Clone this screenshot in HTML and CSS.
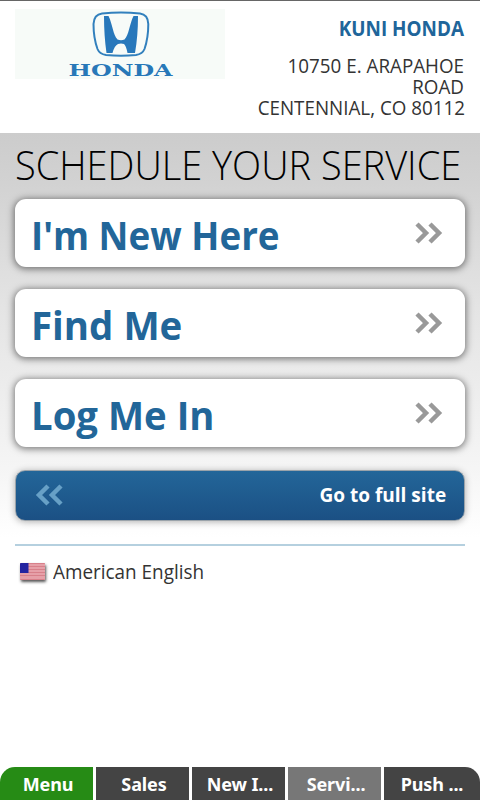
FILE: index.html
```html
<!DOCTYPE html>
<html lang="en">
<head>
<meta charset="utf-8">
<title>Schedule Your Service</title>
<link rel="stylesheet" href="styles.css">
</head>
<body>
<div class="page">
  <header class="header">
    <svg class="logo" viewBox="0 0 210 70" width="210" height="70">
      <path fill="none" stroke="#3280bd" stroke-width="2" d="M87 4.500Q106 2.500 125 4.500Q133 5.500 133.300 15Q133.300 29 129.500 40Q127.500 45 121 46Q106 47.500 91 46Q84.500 45 82.500 40Q78.500 29 78.500 15Q79 5.500 87 4.500Z"/>
      <path fill="#2878bb" d="M89 7h4.500C97.500 15 98 26 102.500 30.500Q106 32 109.500 30.500C114 26 114.500 15 118.500 7h4.500Q123 27 120 44h-7.500Q111 36.500 109 35Q106 34.200 103 35Q99.500 36.500 97.500 44H91.500Q89 27 89 7Z"/>
      <text class="logo-text" x="53.500" y="67" textLength="104" lengthAdjust="spacingAndGlyphs">HONDA</text>
    </svg>
    <div class="dealer">
      <div class="name"><span>KUNI HONDA</span></div>
      <div class="address"><span>10750 E. ARAPAHOE</span><span>ROAD</span><span>CENTENNIAL, CO 80112</span></div>
    </div>
  </header>
  <main class="main">
    <h1 class="title">SCHEDULE YOUR SERVICE</h1>
    <nav class="choices">
      <a class="choice"><span class="new">I'm New Here</span><svg class="chev" viewBox="0 0 28 22"><path d="M2 2l9 9-9 9M15 2l9 9-9 9"/></svg></a>
      <a class="choice"><span class="find">Find Me</span><svg class="chev" viewBox="0 0 28 22"><path d="M2 2l9 9-9 9M15 2l9 9-9 9"/></svg></a>
      <a class="choice"><span class="log">Log Me In</span><svg class="chev" viewBox="0 0 28 22"><path d="M2 2l9 9-9 9M15 2l9 9-9 9"/></svg></a>
    </nav>
    <a class="full"><svg class="chev back" viewBox="0 0 28 22"><path d="M13 2l-9 9 9 9M26 2l-9 9 9 9"/></svg><span>Go to full site</span></a>
    <div class="language">
      <svg class="flag" viewBox="0 0 25 17" width="25" height="17"><path fill="#e6a0a8" d="M0 0h25v17H0z"/><path stroke="#d8808a" stroke-width="1" d="M0 .5h25M0 3.500h25M0 6.500h25M0 9.500h25M0 12.500h25M0 16.500h25"/><path fill="#2424a0" d="M0 0h8.500v10H0z"/></svg>
      <span>American English</span>
    </div>
  </main>
  <footer class="tabs"><a class="tab on">Menu</a><a class="tab">Sales</a><a class="tab">New I...</a><a class="tab pale">Servi...</a><a class="tab">Push ...</a></footer>
</div>
</body>
</html>
```
FILE: styles.css
```css
* { box-sizing: border-box; }
body { margin: 0; background: #fff; font-family: "Open Sans", "Noto Sans", sans-serif; color: #333; }
.page { width: 480px; height: 800px; display: flex; flex-direction: column; overflow: hidden; border-top: 1px solid #666; }
.header { height: 132px; padding: 8px 16px 0 15px; display: flex; justify-content: space-between; }
.logo { background: #f7fbf8; flex: none; }
.logo-text { font: bold 17px "DejaVu Serif", serif; fill: #2878b8; }
.dealer { text-align: right; white-space: nowrap; width: 225px; }
.dealer span { display: block; transform-origin: right; }
.name { font-size: 20.500px; font-weight: 700; line-height: 24px; color: #20659a; padding-top: 7px; }
.address { font-size: 20.500px; line-height: 21px; margin-top: 15px; }
.name span { transform: scaleX(.922); }
.address span { transform: scaleX(.917); }
.main { flex: 1; padding: 0 15px; background: linear-gradient(#ccc 0, #d2d2d2 50px, #e4e4e4 175px, #f5f5f5 335px, #fff 405px); }
.title { margin: 0; height: 66px; font-size: 40.500px; line-height: 64px; font-weight: 300; color: #000; white-space: nowrap; transform-origin: left; transform: scaleX(.938); }
.choices { display: flex; flex-direction: column; gap: 22px; }
.choice { height: 68px; border-radius: 11px; background: #fff; box-shadow: 0 1px 7px 1px rgba(0,0,0,.5); display: flex; align-items: center; justify-content: space-between; padding: 0 22px 0 16px; }
.choice span { font-size: 39.500px; font-weight: 700; line-height: 68px; color: #226699; padding-top: 3px; transform-origin: left; white-space: nowrap; }
.choice .new { transform: scaleX(.931); }
.choice .find { transform: scaleX(.973); }
.choice .log { transform: scaleX(.97); }
.chev { width: 28px; height: 22px; fill: none; stroke: #999; stroke-width: 4.500; }
.full { height: 51px; margin-top: 23px; border: 1px solid #9aa3aa; border-radius: 10px; background: linear-gradient(#236699, #1b5084); box-shadow: 0 1px 7px rgba(0,0,0,.3); display: flex; align-items: center; justify-content: space-between; padding: 0 18px 2px 19px; }
.back { stroke: #67a0c6; }
.full span { color: #fff; font-size: 20px; font-weight: 700; transform-origin: right; transform: scaleX(.952); }
.language { margin-top: 23px; border-top: 2px solid #b5d0df; padding: 10px 0 0 5px; display: flex; align-items: center; gap: 8px; }
.flag { box-shadow: 1px 2px 3px #555; border-radius: 1px; }
.language span { font-size: 20.500px; line-height: 30px; transform-origin: left; transform: scaleX(.922); }
.tabs { height: 33px; display: grid; grid-template-columns: repeat(5, 93px); gap: 3px; font-family: "Noto Sans", sans-serif; }
.tab { background: #444; color: #fff; font-size: 18px; font-weight: 700; line-height: 35px; text-align: center; height: 33px; white-space: nowrap; padding-left: 3px; letter-spacing: -.1px; }
.tab.on { background: #268b15; border-top-left-radius: 15px; }
.tab.pale { background: #777; }
.tab:last-child { width: 96px; border-top-right-radius: 15px; padding-left: 0; }
```
